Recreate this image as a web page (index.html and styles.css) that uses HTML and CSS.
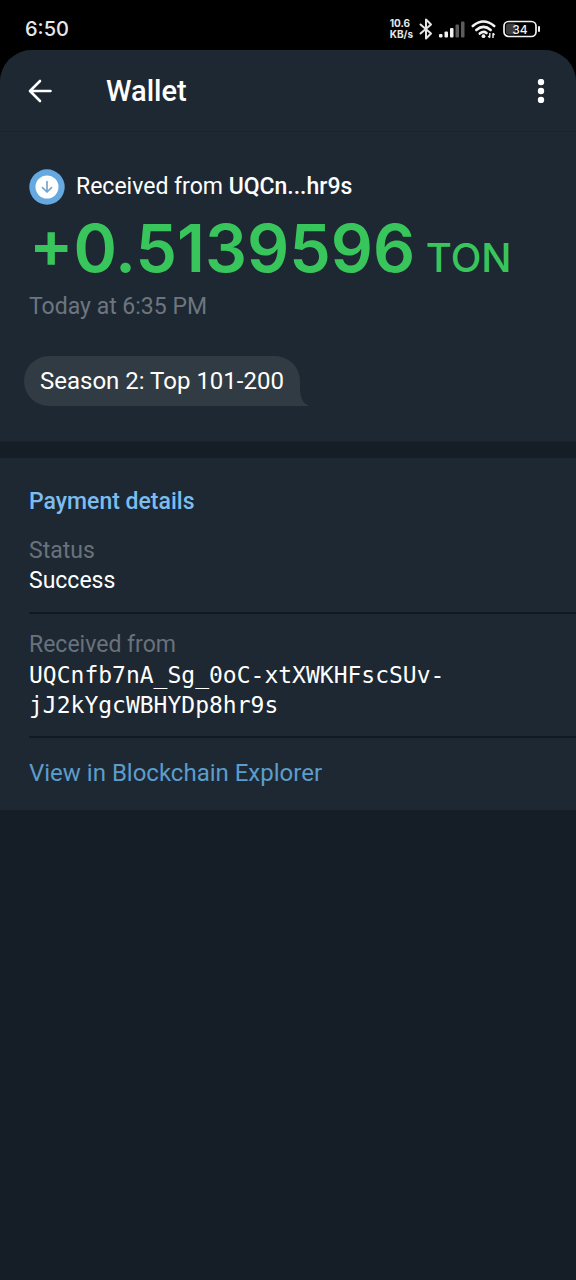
FILE: index.html
```html
<!DOCTYPE html>
<html lang="en">
<head>
<meta charset="utf-8">
<meta name="viewport" content="width=device-width, initial-scale=1">
<title>Wallet</title>
<link rel="stylesheet" href="styles.css">
</head>
<body>
<div class="status-bar">
  <time class="clock">6:50</time>
  <div class="indicators">
    <span class="net-speed"><span>10.6</span><span>KB/s</span></span>
    <svg class="bluetooth" viewBox="0 0 14 22" width="14" height="22" aria-label="Bluetooth"><path d="M1.500 6.500 12 15.500 7 20.500V1.500L12 6.500 1.500 15.500" fill="none" stroke="#e4e4e4" stroke-width="2" stroke-linejoin="round" stroke-linecap="round"/></svg>
    <svg class="signal" viewBox="0 0 26 18" width="26" height="18" aria-label="Signal"><g fill="#f2f2f2"><rect x="0" y="14" width="3.500" height="3.500" rx="1"/><rect x="5.500" y="11.500" width="3.500" height="6" rx="1"/><rect x="11" y="8" width="3.500" height="9.500" rx="1"/></g><g fill="#5c5c5c"><rect x="16.500" y="4.500" width="3.500" height="13" rx="1"/><rect x="22" y="1.500" width="3.500" height="16" rx="1"/></g></svg>
    <svg class="wifi" viewBox="0 0 26 20" width="26" height="20" aria-label="Wi-Fi"><g fill="none" stroke="#f2f2f2" stroke-width="2.600" stroke-linecap="round"><path d="M1.800 7Q12.500-2 23.200 7"/><path d="M5.300 11Q12.500 4.800 19.700 11"/><path d="M8.800 14.600Q12.500 11.600 15.500 14"/></g><circle cx="12.500" cy="17.200" r="1.900" fill="#f2f2f2"/><path d="M18.800 14v4.500M17.300 17l1.500 1.800M22 19V14.300M23.500 16 22 14.200" fill="none" stroke="#f2f2f2" stroke-width="1.400"/></svg>
    <svg class="battery" viewBox="0 0 38 18" width="38" height="18" aria-label="Battery 34%"><rect x="3" y="3.500" width="10" height="11" rx="2.500" fill="#3d3d3d"/><rect x="1" y="1.500" width="32" height="15" rx="4.500" fill="none" stroke="#f2f2f2" stroke-width="1.700"/><path d="M36 7v4" stroke="#f2f2f2" stroke-width="2" stroke-linecap="round"/><text class="battery-level" x="17" y="13.500" text-anchor="middle">34</text></svg>
  </div>
</div>
<div class="app">
  <header class="toolbar">
    <button class="icon-button" type="button" aria-label="Back"><svg viewBox="0 0 24 24" width="24" height="24"><path d="M22.500 12H2.500M12 2 2 12l10 10" fill="none" stroke="#fff" stroke-width="2.600" stroke-linecap="round" stroke-linejoin="round"/></svg></button>
    <h1 class="title">Wallet</h1>
    <button class="icon-button" type="button" aria-label="More options"><svg viewBox="0 0 8 24" width="8" height="24"><g fill="#fff"><circle cx="4" cy="3" r="3.200"/><circle cx="4" cy="12" r="3.200"/><circle cx="4" cy="21" r="3.200"/></g></svg></button>
  </header>
  <main>
    <section class="summary">
      <div class="sender">
        <svg viewBox="0 0 36 36" width="36" height="36" aria-hidden="true"><circle cx="18" cy="18" r="17.700" fill="#65a9e0"/><circle cx="18" cy="18" r="11.500" fill="#fff"/><path d="M18 12.500v10.500M13.500 18.700l4.500 4.300 4.500-4.300" fill="none" stroke="#75a5cf" stroke-width="1.700" stroke-linecap="round" stroke-linejoin="round"/></svg>
        <p class="sender-text">Received from <strong>UQCn...hr9s</strong></p>
      </div>
      <p class="amount">+0.5139596 <span class="currency">TON</span></p>
      <p class="date">Today at 6:35 PM</p>
      <p class="comment">Season 2: Top 101-200<svg class="comment-tail" viewBox="0 0 14 24" width="14" height="24" aria-hidden="true"><path d="M0 0H5C5 12 5 20 14 24H0Z" fill="#313b43"/></svg></p>
    </section>
    <section class="details">
      <h2 class="details-title">Payment details</h2>
      <dl class="fields">
        <div class="field"><dt>Status</dt><dd>Success</dd></div>
        <div class="field"><dt>Received from</dt><dd class="address">UQCnfb7nA_Sg_0oC-xtXWKHFscSUv-<wbr>jJ2kYgcWBHYDp8hr9s</dd></div>
      </dl>
      <a class="explorer" href="#">View in Blockchain Explorer</a>
    </section>
  </main>
</div>
</body>
</html>
```
FILE: styles.css
```css
* { box-sizing: border-box; }
html { background: #000; }
body {
  margin: 0;
  min-height: 100vh;
  display: flex;
  flex-direction: column;
  font-family: Roboto, sans-serif;
  font-size: 23px;
  line-height: 30px;
  color: #fff;
}
h1, h2, p, dl, dd { margin: 0; }

.status-bar {
  height: 50px;
  padding: 8px 35px 0 25px;
  display: flex;
  align-items: center;
  justify-content: space-between;
  font-family: Inter, sans-serif;
  color: #e8e8e8;
}
.clock { font-size: 20px; font-weight: 500; }
.indicators { display: flex; align-items: center; gap: 6px; }
.net-speed {
  display: flex;
  flex-direction: column;
  font-size: 10px;
  line-height: 11px;
  font-weight: 700;
}
.battery-level { font-size: 12px; font-weight: 500; fill: #f2f2f2; }

.app {
  flex: 1;
  background: #151e27;
  border-radius: 32px 32px 0 0;
  overflow: hidden;
}
.toolbar {
  height: 82px;
  padding: 0 16px;
  display: flex;
  align-items: center;
  background: #1e2832;
  border-bottom: 1px solid #1b242d;
}
.icon-button {
  width: 48px;
  height: 48px;
  padding: 0;
  border: 0;
  background: none;
  display: grid;
  place-items: center;
}
.icon-button:last-child { margin-right: -5px; }
.title {
  flex: 1;
  margin-left: 42px;
  font-size: 29px;
  font-weight: 500;
}

.summary {
  padding: 37px 29px 35px;
  background: #1e2832;
  border-bottom: 1px solid #1b222c;
}
.sender { display: flex; align-items: center; gap: 11px; }
.sender-text strong { font-weight: 500; }
.amount {
  margin-top: 7px;
  font-family: Inter, sans-serif;
  font-size: 66px;
  line-height: 72px;
  font-weight: 600;
  color: #38c65c;
  white-space: nowrap;
}
.currency { font-size: 40px; font-weight: 500; margin-left: -6px; }
.date { margin-top: -2px; color: #6d7680; }
.comment {
  position: relative;
  width: fit-content;
  margin: 34px 0 0 -5px;
  padding: 10px 16px;
  border-radius: 25px 25px 0 25px;
  background: #313b43;
  font-size: 24px;
}
.comment-tail { position: absolute; right: -9px; bottom: 0; }

.details {
  margin-top: 16px;
  padding: 29px 0 22px 29px;
  background: #1e2832;
}
.details-title { font-size: 23px; font-weight: 500; color: #7cbdf0; }
.fields { margin-top: 19px; }
.field { padding-bottom: 16px; border-bottom: 2px solid #111a22; }
.field + .field { padding-top: 16px; }
dt { color: #69727c; }
.address { font-family: "DejaVu Sans Mono", monospace; }
.explorer {
  display: block;
  margin-top: 20px;
  font-size: 24px;
  color: #5b9dcc;
  text-decoration: none;
}
```
